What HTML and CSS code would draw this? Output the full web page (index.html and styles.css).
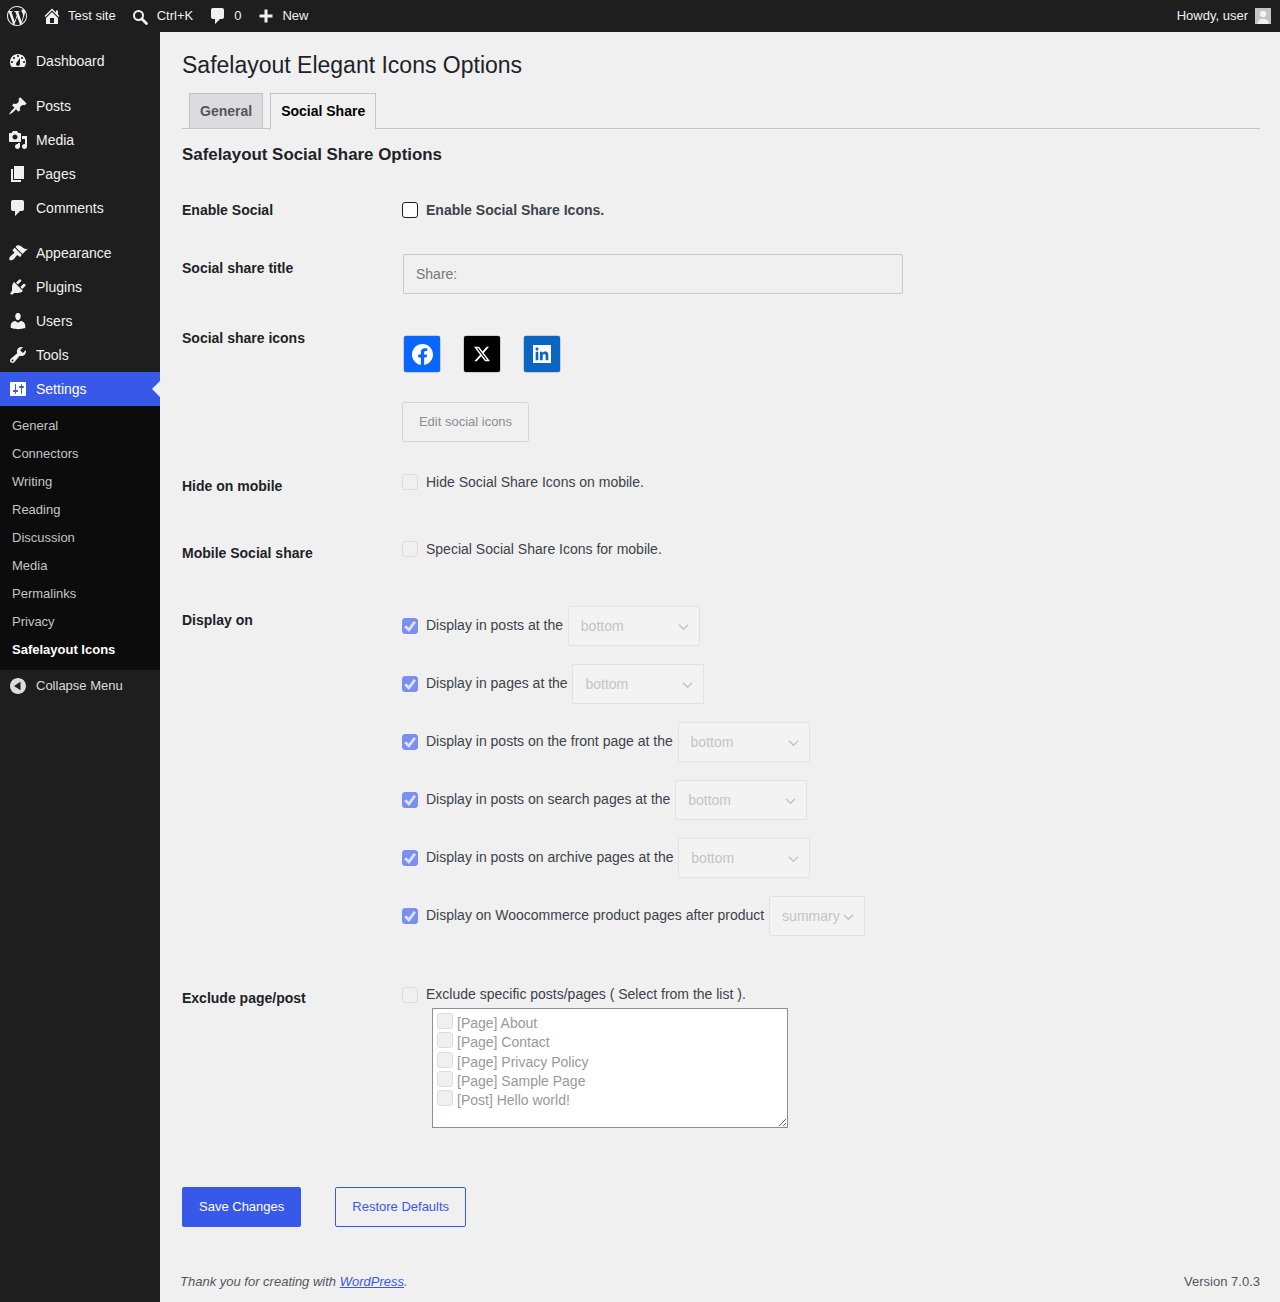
FILE: index.html
```html
<!DOCTYPE html>
<html lang="en">
<head>
  <meta charset="UTF-8" />
  <meta name="viewport" content="width=device-width, initial-scale=1.0" />
  <title>Safelayout Elegant Icons Options</title>
  <link rel="stylesheet" href="styles.css">
</head>
<body>
  <header class="adminbar">
    <svg class="wp-logo" viewBox="0 0 24 24"><path d="M21.469 6.825c.84 1.537 1.318 3.3 1.318 5.175 0 3.979-2.156 7.456-5.363 9.325l3.295-9.527c.615-1.54.82-2.771.82-3.864 0-.405-.026-.78-.07-1.11m-7.981.105c.647-.03 1.232-.105 1.232-.105.582-.075.514-.93-.067-.899 0 0-1.755.135-2.88.135-1.064 0-2.85-.15-2.85-.15-.585-.03-.661.855-.075.885 0 0 .54.061 1.125.09l1.68 4.605-2.37 7.08L5.354 6.9c.649-.03 1.234-.1 1.234-.1.585-.075.516-.93-.065-.896 0 0-1.746.138-2.874.138-.2 0-.438-.008-.69-.015C4.911 3.15 8.235 1.215 12 1.215c2.809 0 5.365 1.072 7.286 2.833-.046-.003-.091-.009-.141-.009-1.06 0-1.812.923-1.812 1.914 0 .89.513 1.643 1.06 2.531.411.72.89 1.643.89 2.977 0 .915-.354 1.994-.821 3.479l-1.075 3.585-3.9-11.61.001.014zM12 22.784c-1.059 0-2.081-.153-3.048-.437l3.237-9.406 3.315 9.087c.024.053.05.101.078.149-1.12.393-2.325.609-3.582.609M1.211 12c0-1.564.336-3.05.935-4.39L7.29 21.709C3.694 19.96 1.212 16.271 1.211 12M12 0C5.385 0 0 5.385 0 12s5.385 12 12 12 12-5.385 12-12S18.615 0 12 0"/></svg>
    <a class="bar-item" href="#">
      <svg class="bar-icon" viewBox="0 0 20 20"><path d="M16 8.5l1.53 1.53-1.06 1.06L10 4.62l-6.47 6.47-1.06-1.06L10 2.5l4 4v-2h2v4zm-6-2.46l6 5.99V18H4v-5.97zM12 17v-5H8v5h4z"/></svg>
      <span>Test site</span>
    </a>
    <a class="bar-item" href="#">
      <svg class="bar-icon" viewBox="0 0 20 20"><circle cx="7.5" cy="9.500" r="4.500" fill="none" stroke="currentColor" stroke-width="2"/><path d="M10.7 12.7l4.800 4.800" stroke="currentColor" stroke-width="2.800" stroke-linecap="round"/></svg>
      <span>Ctrl+K</span>
    </a>
    <a class="bar-item" href="#">
      <svg class="bar-icon" viewBox="0 0 20 20"><path d="M5 2h9c1.1 0 2 .9 2 2v7c0 1.1-.9 2-2 2h-2l-5 5v-5H5c-1.1 0-2-.9-2-2V4c0-1.1.9-2 2-2z"/></svg>
      <span>0</span>
    </a>
    <a class="bar-item" href="#">
      <svg class="bar-icon" viewBox="0 0 20 20"><path d="M8.5 3.5h3v5h5v3h-5v5h-3v-5h-5v-3h5z"/></svg>
      <span>New</span>
    </a>
    <a class="bar-user" href="#">
      <span>Howdy, user</span>
      <svg class="avatar" viewBox="0 0 16 16"><rect width="16" height="16" fill="#c4c4c4"/><circle cx="8" cy="6" r="3.2" fill="#f1f1f1"/><path d="M2.5 16c0-3.6 2.4-5.2 5.5-5.2s5.500 1.600 5.500 5.200z" fill="#f1f1f1"/></svg>
    </a>
  </header>

  <div class="layout">
    <nav class="sidebar">
      <ul class="menu">
        <li class="menu-item">
          <svg class="menu-icon" viewBox="0 0 20 20"><path fill-rule="evenodd" d="M3.76 16h12.48c1.1-1.37 1.76-3.11 1.76-5 0-4.42-3.58-8-8-8s-8 3.58-8 8c0 1.89.66 3.63 1.76 5zM10 4c.55 0 1 .45 1 1s-.45 1-1 1-1-.45-1-1 .45-1 1-1zM6 6c.55 0 1 .45 1 1s-.45 1-1 1-1-.45-1-1 .45-1 1-1zm8 0c.55 0 1 .45 1 1s-.45 1-1 1-1-.45-1-1 .45-1 1-1zm-5.370 5.550L12 7v6c0 1.100-.9 2-2 2s-2-.9-2-2c0-.57.24-1.080.63-1.450zM4 10c.55 0 1 .45 1 1s-.45 1-1 1-1-.45-1-1 .45-1 1-1zm12 0c.55 0 1 .45 1 1s-.45 1-1 1-1-.45-1-1 .45-1 1-1z"/></svg>
          Dashboard
        </li>
        <li class="menu-item menu-gap">
          <svg class="menu-icon" viewBox="0 0 20 20"><path d="M10.44 3.02l1.82-1.82 6.36 6.35-1.830 1.820c-1.050-.68-2.480-.57-3.410.36l-.75.75c-.92.93-1.040 2.350-.35 3.410l-1.830 1.820-2.410-2.410-2.800 2.790c-.42.42-3.380 2.710-3.800 2.290s1.860-3.390 2.280-3.810l2.790-2.790L4.100 9.360l1.830-1.820c1.050.69 2.480.57 3.400-.36l.75-.75c.93-.92 1.050-2.350.36-3.410z"/></svg>
          Posts
        </li>
        <li class="menu-item">
          <svg class="menu-icon" viewBox="0 0 20 20"><path fill-rule="evenodd" d="M13 11V4c0-.55-.45-1-1-1h-1.670L9 1H5L3.670 3H2c-.55 0-1 .45-1 1v7c0 .55.45 1 1 1h10c.55 0 1-.45 1-1zM7 4.500c1.380 0 2.500 1.120 2.500 2.500S8.380 9.500 7 9.500 4.500 8.380 4.500 7 5.620 4.500 7 4.500zM14 6h5v10.500c0 1.380-1.120 2.500-2.500 2.500S14 17.880 14 16.500s1.120-2.500 2.500-2.500c.17 0 .34.02.5.05V9h-3V6zm-4 8.050V13h2v3.500c0 1.380-1.120 2.500-2.500 2.500S7 17.880 7 16.500 8.120 14 9.500 14c.17 0 .34.02.5.05z"/></svg>
          Media
        </li>
        <li class="menu-item">
          <svg class="menu-icon" viewBox="0 0 20 20"><path d="M6 15V2h10v13H6zm-1 1h8v2H3V5h2v11z"/></svg>
          Pages
        </li>
        <li class="menu-item">
          <svg class="menu-icon" viewBox="0 0 20 20"><path d="M5 2h9c1.100 0 2 .9 2 2v7c0 1.100-.9 2-2 2h-2l-5 5v-5H5c-1.100 0-2-.9-2-2V4c0-1.100.9-2 2-2z"/></svg>
          Comments
        </li>
        <li class="menu-item menu-gap">
          <svg class="menu-icon" viewBox="0 0 20 20"><path d="M14.480 11.060L7.410 3.990l1.500-1.500c.5-.56 2.300-.47 3.510.32 1.210.8 1.430 1.280 2.910 2.100 1.180.64 2.450 1.260 4.450.85zm-.71.71L6.700 4.700 4.930 6.470c-.39.39-.39 1.020 0 1.410l1.060 1.060c.39.39.39 1.030 0 1.420-.6.6-1.430 1.110-2.210 1.690-.35.26-.7.53-1.010.84C1.430 13.710.96 15.560 1.530 17.030c1.470.57 3.320.1 4.640-1.250.31-.31.58-.66.84-1.010.58-.78 1.090-1.610 1.690-2.210.39-.39 1.030-.39 1.420 0l1.060 1.060c.39.39 1.020.39 1.410 0z"/></svg>
          Appearance
        </li>
        <li class="menu-item">
          <svg class="menu-icon" viewBox="0 0 20 20"><path d="M13.110 4.360L9.870 7.600 8 5.730l3.240-3.240c.35-.34 1.050-.2 1.560.32.52.51.66 1.210.31 1.550zm-8 1.770l.91-1.120 9.010 9.010-1.190.84c-.71.71-2.630 1.160-3.820 1.160H6.140L4.900 17.260c-.59.59-1.540.59-2.120 0-.59-.58-.59-1.530 0-2.120l1.240-1.240v-3.880c0-1.130.4-3.190 1.090-3.890zm7.260 3.970l3.240-3.240c.34-.35 1.040-.21 1.550.31.52.51.66 1.210.31 1.550l-3.240 3.250z"/></svg>
          Plugins
        </li>
        <li class="menu-item">
          <svg class="menu-icon" viewBox="0 0 20 20"><path d="M10 9.250c-2.270 0-2.730-3.440-2.730-3.440C7 4.020 7.820 2 9.970 2c2.160 0 2.980 2.020 2.710 3.810 0 0-.41 3.440-2.680 3.440zm0 2.570L12.720 10c2.390 0 4.520 2.330 4.520 4.530v2.490s-3.650 1.130-7.240 1.130c-3.650 0-7.240-1.130-7.240-1.130v-2.490c0-2.250 1.940-4.480 4.470-4.480z"/></svg>
          Users
        </li>
        <li class="menu-item">
          <svg class="menu-icon" viewBox="0 0 20 20"><path fill-rule="evenodd" d="M16.680 9.770c-1.340 1.340-3.300 1.670-4.950.99l-5.410 6.520c-.99.99-2.590.99-3.580 0s-.99-2.590 0-3.570l6.520-5.420c-.68-1.650-.35-3.610.99-4.950 1.280-1.280 3.120-1.620 4.720-1.060l-2.890 2.890 2.820 2.820 2.860-2.870c.53 1.580.18 3.390-1.080 4.650zM3.810 16.210c.4.39 1.040.39 1.430 0 .4-.4.4-1.040 0-1.430-.39-.4-1.030-.4-1.430 0-.39.39-.39 1.030 0 1.430z"/></svg>
          Tools
        </li>
        <li class="menu-item current">
          <svg class="menu-icon" viewBox="0 0 20 20"><path fill-rule="evenodd" d="M18 16V4c0-.55-.45-1-1-1H3c-.55 0-1 .45-1 1v12c0 .55.45 1 1 1h14c.55 0 1-.45 1-1zM8 11h1c.55 0 1 .45 1 1s-.45 1-1 1H8v1.500c0 .28-.22.5-.5.5s-.5-.22-.5-.5V13H6c-.55 0-1-.45-1-1s.45-1 1-1h1V5.500c0-.28.22-.5.5-.5s.5.22.5.5V11zm5-2h-1c-.55 0-1-.45-1-1s.45-1 1-1h1V5.500c0-.28.22-.5.5-.5s.5.22.5.5V7h1c.55 0 1 .45 1 1s-.45 1-1 1h-1v5.500c0 .28-.22.5-.5.5s-.5-.22-.5-.5V9z"/></svg>
          Settings
        </li>
      </ul>
      <ul class="submenu">
        <li>General</li>
        <li>Connectors</li>
        <li>Writing</li>
        <li>Reading</li>
        <li>Discussion</li>
        <li>Media</li>
        <li>Permalinks</li>
        <li>Privacy</li>
        <li class="current">Safelayout Icons</li>
      </ul>
      <div class="collapse">
        <svg class="menu-icon" viewBox="0 0 20 20"><path fill-rule="evenodd" d="M18 10c0-4.420-3.580-8-8-8s-8 3.580-8 8 3.580 8 8 8 8-3.580 8-8zm-5.500 4.200L6 10l6.500-4.200z"/></svg>
        Collapse Menu
      </div>
    </nav>

    <main class="content">
      <h1 class="page-title">Safelayout Elegant Icons Options</h1>
      <div class="tabs">
        <a class="tab" href="#">General</a>
        <a class="tab active" href="#">Social Share</a>
      </div>
      <h2 class="section-title">Safelayout Social Share Options</h2>

      <form class="options">
        <div class="row row-enable">
          <div class="row-label">Enable Social</div>
          <label class="check strong"><input type="checkbox" class="box"> Enable Social Share Icons.</label>
        </div>

        <div class="row row-title">
          <div class="row-label">Social share title</div>
          <input class="text-input" type="text" value="Share:" disabled>
        </div>

        <div class="row row-icons">
          <div class="row-label">Social share icons</div>
          <div>
            <div class="share-icons">
              <span class="share-icon facebook">
                <svg viewBox="0 0 24 24" width="21" height="21"><path d="M24 12.073c0-6.627-5.373-12-12-12s-12 5.373-12 12c0 5.990 4.388 10.954 10.125 11.854v-8.385H7.078v-3.470h3.047V9.430c0-3.007 1.792-4.669 4.533-4.669 1.312 0 2.686.235 2.686.235v2.953H15.830c-1.491 0-1.956.925-1.956 1.874v2.250h3.328l-.532 3.470h-2.796v8.385C19.612 23.027 24 18.062 24 12.073z"/></svg>
              </span>
              <span class="share-icon twitter">
                <svg viewBox="0 0 24 24" width="16" height="16"><path d="M18.901 1.153h3.680l-8.040 9.190L24 22.846h-7.406l-5.800-7.584-6.638 7.584H.474l8.600-9.830L0 1.154h7.594l5.243 6.932ZM17.610 20.644h2.039L6.486 3.240H4.298Z"/></svg>
              </span>
              <span class="share-icon linkedin">
                <svg viewBox="0 0 24 24" width="18" height="18"><rect width="24" height="24" fill="#fff"/><path fill="#0a66c2" d="M20.447 20.452h-3.554v-5.569c0-1.328-.027-3.037-1.852-3.037-1.853 0-2.136 1.445-2.136 2.939v5.667H9.351V9h3.414v1.561h.046c.477-.9 1.637-1.850 3.370-1.850 3.601 0 4.267 2.370 4.267 5.455v6.286zM5.337 7.433c-1.144 0-2.063-.926-2.063-2.065 0-1.138.92-2.063 2.063-2.063 1.140 0 2.064.925 2.064 2.063 0 1.139-.925 2.065-2.064 2.065zm1.782 13.019H3.555V9h3.564v11.452z"/></svg>
              </span>
            </div>
            <button class="edit-btn" type="button" disabled>Edit social icons</button>
          </div>
        </div>

        <div class="row row-hide">
          <div class="row-label">Hide on mobile</div>
          <label class="check"><input type="checkbox" class="box" disabled> Hide Social Share Icons on mobile.</label>
        </div>

        <div class="row row-mobile">
          <div class="row-label">Mobile Social share</div>
          <label class="check"><input type="checkbox" class="box" disabled> Special Social Share Icons for mobile.</label>
        </div>

        <div class="row row-display">
          <div class="row-label">Display on</div>
          <div class="display-list">
            <div class="display-item">
              <label class="check"><input type="checkbox" class="box" checked disabled> Display in posts at the</label>
              <span class="select"><select disabled><option>bottom</option></select><svg viewBox="0 0 12 8"><path d="M1 1.500l5 5 5-5"/></svg></span>
            </div>
            <div class="display-item">
              <label class="check"><input type="checkbox" class="box" checked disabled> Display in pages at the</label>
              <span class="select"><select disabled><option>bottom</option></select><svg viewBox="0 0 12 8"><path d="M1 1.500l5 5 5-5"/></svg></span>
            </div>
            <div class="display-item">
              <label class="check"><input type="checkbox" class="box" checked disabled> Display in posts on the front page at the</label>
              <span class="select"><select disabled><option>bottom</option></select><svg viewBox="0 0 12 8"><path d="M1 1.500l5 5 5-5"/></svg></span>
            </div>
            <div class="display-item">
              <label class="check"><input type="checkbox" class="box" checked disabled> Display in posts on search pages at the</label>
              <span class="select"><select disabled><option>bottom</option></select><svg viewBox="0 0 12 8"><path d="M1 1.500l5 5 5-5"/></svg></span>
            </div>
            <div class="display-item">
              <label class="check"><input type="checkbox" class="box" checked disabled> Display in posts on archive pages at the</label>
              <span class="select"><select disabled><option>bottom</option></select><svg viewBox="0 0 12 8"><path d="M1 1.500l5 5 5-5"/></svg></span>
            </div>
            <div class="display-item">
              <label class="check"><input type="checkbox" class="box" checked disabled> Display on Woocommerce product pages after product</label>
              <span class="select narrow"><select disabled><option>summary</option></select><svg viewBox="0 0 12 8"><path d="M1 1.500l5 5 5-5"/></svg></span>
            </div>
          </div>
        </div>

        <div class="row row-exclude">
          <div class="row-label">Exclude page/post</div>
          <div>
            <label class="check"><input type="checkbox" class="box" disabled> Exclude specific posts/pages ( Select from the list ).</label>
            <div class="exclude-list">
              <label><input type="checkbox" class="box" disabled> [Page] About</label>
              <label><input type="checkbox" class="box" disabled> [Page] Contact</label>
              <label><input type="checkbox" class="box" disabled> [Page] Privacy Policy</label>
              <label><input type="checkbox" class="box" disabled> [Page] Sample Page</label>
              <label><input type="checkbox" class="box" disabled> [Post] Hello world!</label>
            </div>
          </div>
        </div>

        <div class="actions">
          <button class="btn primary" type="button">Save Changes</button>
          <button class="btn secondary" type="button">Restore Defaults</button>
        </div>
      </form>

      <footer class="page-footer">
        <span class="thanks">Thank you for creating with <a href="#">WordPress</a>.</span>
        <span>Version 7.0.3</span>
      </footer>
    </main>
  </div>
</body>
</html>
```

FILE: styles.css
```css
html, body {
  margin: 0;
  padding: 0;
}

body {
  min-height: 100vh;
  display: flex;
  flex-direction: column;
  background: #f0f0f1;
  color: #3c434a;
  font-family: "Liberation Sans", Arial, sans-serif;
  font-size: 14px;
}

a {
  color: inherit;
  text-decoration: none;
}

ul {
  list-style: none;
  margin: 0;
  padding: 0;
}

/* top bar */
.adminbar {
  height: 32px;
  flex: none;
  display: flex;
  align-items: center;
  padding: 0 9px 0 7px;
  background: #1e1e1e;
  color: #f0f0f1;
  font-size: 13px;
}

.adminbar span {
  margin-bottom: 2px;
}

.wp-logo {
  width: 20px;
  height: 20px;
  fill: #f0f0f1;
  margin-right: 15px;
}

.bar-item {
  display: flex;
  align-items: center;
  gap: 6px;
  margin-right: 15px;
}

.bar-icon {
  width: 20px;
  height: 20px;
  fill: currentColor;
  flex: none;
}

.bar-user {
  margin-left: auto;
  display: flex;
  align-items: center;
  gap: 7px;
}

.avatar {
  width: 16px;
  height: 16px;
}

/* sidebar */
.layout {
  flex: 1;
  display: flex;
}

.sidebar {
  width: 160px;
  flex: none;
  background: #1e1e1e;
  color: #f0f0f1;
  padding-top: 12px;
}

.menu-item {
  position: relative;
  height: 34px;
  display: flex;
  align-items: center;
  gap: 8px;
  padding-left: 8px;
}

.menu-gap {
  margin-top: 11px;
}

.menu-icon {
  width: 20px;
  height: 20px;
  fill: currentColor;
  flex: none;
}

.menu-item.current {
  background: #3858e9;
  color: #fff;
}

.menu-item.current::after {
  content: "";
  position: absolute;
  right: 0;
  top: 9px;
  border: 8px solid transparent;
  border-right-color: #f0f0f1;
}

.submenu {
  background: #0c0c0c;
  padding: 6px 0;
  font-size: 13px;
  color: #c3c4c7;
}

.submenu li {
  height: 28px;
  line-height: 28px;
  padding-left: 12px;
}

.submenu li.current {
  color: #fff;
  font-weight: 600;
}

.collapse {
  height: 31px;
  display: flex;
  align-items: center;
  gap: 8px;
  padding-left: 8px;
  font-size: 13px;
  color: #dcdcde;
}

/* main */
.content {
  flex: 1;
  min-width: 0;
  display: flex;
  flex-direction: column;
  padding: 0 20px 0 22px;
}

.page-title {
  margin: 0;
  padding-top: 18px;
  height: 43px;
  line-height: 30px;
  font-size: 23px;
  font-weight: 400;
  color: #1d2327;
}

.tabs {
  display: flex;
  gap: 7px;
  height: 35px;
  padding-left: 7px;
  border-bottom: 1px solid #c3c4c7;
}

.tab {
  height: 34px;
  line-height: 34px;
  padding: 0 10px;
  border: 1px solid #c3c4c7;
  background: #dcdcde;
  color: #50575e;
  font-weight: 600;
}

.tab.active {
  height: 35px;
  background: #f0f0f1;
  border-bottom-color: #f0f0f1;
  color: #000;
}

.section-title {
  margin: 0;
  padding-top: 16px;
  height: 73px;
  box-sizing: border-box;
  line-height: 20px;
  font-size: 16.9px;
  font-weight: 600;
  color: #1d2327;
}

.row {
  display: flex;
  align-items: flex-start;
}

.row-label {
  width: 220px;
  flex: none;
  line-height: 16px;
  font-weight: 600;
  color: #1d2327;
}

.row-enable { padding-bottom: 36px; }
.row-title { padding-bottom: 36px; }
.row-icons { padding-bottom: 32px; }
.row-hide { padding-bottom: 47px; }
.row-mobile { padding-bottom: 45px; }
.row-display { padding-bottom: 49px; }
.row-exclude { padding-bottom: 59px; }

.row-title .row-label { padding-top: 6px; }
.row-hide .row-label,
.row-mobile .row-label { padding-top: 4px; }
.row-display .row-label { padding-top: 6px; }
.row-exclude .row-label { padding-top: 5px; }

.check {
  display: flex;
  align-items: center;
  gap: 8px;
  line-height: 16px;
}

.strong {
  font-weight: 600;
}

.box {
  appearance: none;
  position: relative;
  width: 16px;
  height: 16px;
  margin: 0;
  flex: none;
  border: 1px solid #8c8f94;
  border-radius: 2px;
  background: #fff;
}

.strong .box {
  border-color: #1e1e1e;
  border-radius: 3px;
}

.box:disabled {
  border-color: #dcdcde;
  background: #f0f0f1;
  border-radius: 3px;
}

.box:checked {
  border-color: #7b8ff1;
  background: #7b8ff1;
}

.box:checked::before {
  content: "";
  position: absolute;
  left: 1px;
  top: 2px;
  width: 12px;
  height: 11px;
  background: #dfe4fb;
  clip-path: polygon(0 55%, 20% 40%, 40% 62%, 82% 0, 100% 14%, 42% 100%);
}

/* these labels sit their text a pixel above the box */
.display-item .check {
  margin-bottom: 2px;
}

.display-item .check .box,
.row-exclude .check .box {
  margin-top: 2px;
}

.text-input {
  width: 500px;
  height: 40px;
  margin: 0 0 0 1px;
  padding: 0 12px;
  box-sizing: border-box;
  border: 1px solid #c9c9c9;
  border-radius: 2px;
  background: #f0f0f1;
  color: #777;
  font: 14px "Liberation Sans", Arial, sans-serif;
}

.share-icons {
  display: flex;
  gap: 24px;
  margin: 6px 0 30px 2px;
}

.share-icon {
  width: 36px;
  height: 36px;
  display: flex;
  align-items: center;
  justify-content: center;
  border-radius: 2px;
  box-shadow: 0 0 0 0.5px #aaa;
}

.facebook { background: #0866ff; fill: #fff; }
.twitter { background: #000; fill: #fff; }
.linkedin { background: #0a66c2; }

.edit-btn {
  display: block;
  width: 127px;
  height: 40px;
  padding: 0 0 2px;
  border: 1px solid #d5d5d5;
  border-radius: 2px;
  background: #f0f0f1;
  color: #8e8e8e;
  font: 13px "Liberation Sans", Arial, sans-serif;
}

.display-list {
  display: flex;
  flex-direction: column;
  gap: 18px;
}

.display-item {
  display: flex;
  align-items: center;
  gap: 4.85px;
  height: 40px;
}

.select {
  position: relative;
  width: 132px;
  height: 40px;
}

.select.narrow {
  width: 96px;
}

.select select {
  appearance: none;
  width: 100%;
  height: 100%;
  padding: 0 12px;
  border: 1px solid #e2e2e2;
  border-radius: 2px;
  background: #f3f3f3;
  color: #c4c4c4;
  opacity: 1;
  font: 14px "Liberation Sans", Arial, sans-serif;
}

.select svg {
  position: absolute;
  right: 11px;
  top: 17px;
  width: 11px;
  height: 8px;
  fill: none;
  stroke: #c4c4c4;
  stroke-width: 1.5;
}

.exclude-list {
  width: 356px;
  height: 120px;
  box-sizing: border-box;
  margin: 5px 0 0 30px;
  padding: 4px;
  border: 1px solid #8c8f94;
  background: #fff;
  color: #999;
  overflow: auto;
  resize: both;
}

.exclude-list label {
  display: flex;
  gap: 4px;
  height: 19.3px;
  line-height: 20px;
}

.actions {
  display: flex;
  gap: 34px;
}

.btn {
  height: 40px;
  padding: 0 16px 2px;
  border: 1px solid #3858e9;
  border-radius: 2px;
  font: 13px "Liberation Sans", Arial, sans-serif;
}

.btn.primary {
  background: #3858e9;
  color: #fff;
}

.btn.secondary {
  background: transparent;
  color: #3858e9;
}

.page-footer {
  display: flex;
  justify-content: space-between;
  margin: 47px 0 0 -2px;
  line-height: 16px;
  font-size: 13px;
  color: #50575e;
}

.thanks {
  font-style: italic;
}

.thanks a {
  color: #3858e9;
  text-decoration: underline;
}
```
